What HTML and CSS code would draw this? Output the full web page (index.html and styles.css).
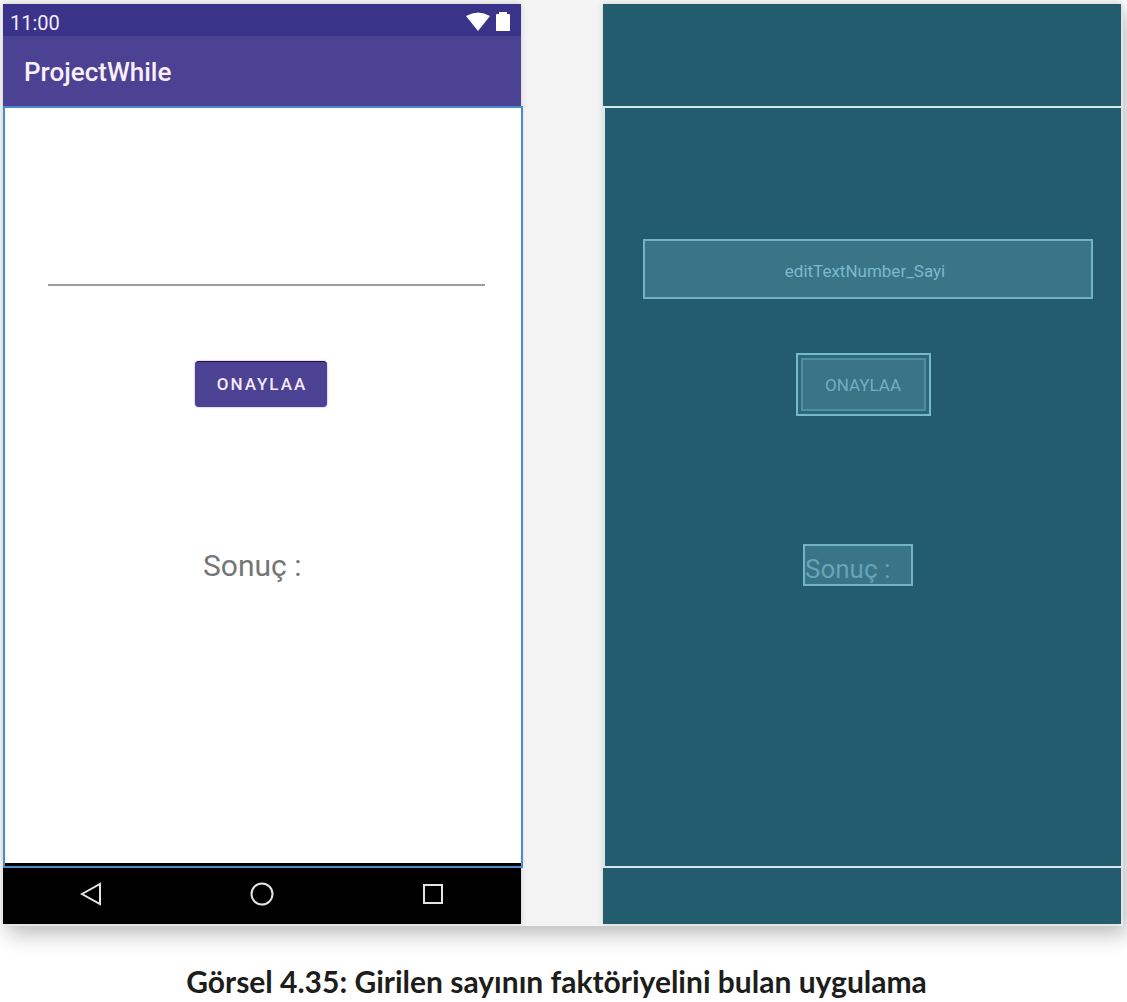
FILE: index.html
```html
<!DOCTYPE html>
<html lang="tr">
<head>
<meta charset="utf-8">
<title>Görsel 4.35</title>
<link rel="stylesheet" href="styles.css">
</head>
<body>
<figure class="figure">
  <div class="canvas">
    <section class="phone" aria-label="Tasarım">
      <div class="status-bar">
        <span>11:00</span>
        <span class="status-icons">
          <svg width="26" height="22" viewBox="0 0 26 22" aria-hidden="true"><path d="M1 4Q13-3 25 4L13 19Z" fill="#fff"/></svg>
          <svg width="16" height="22" viewBox="0 0 16 22" aria-hidden="true"><path d="M4 0h8v2h2q1 0 1 1v16H1V3q0-1 1-1h2Z" fill="#fff"/></svg>
        </span>
      </div>
      <header class="app-bar">ProjectWhile</header>
      <div class="content">
        <input class="number-input" type="text" inputmode="numeric" aria-label="Sayı">
        <button class="confirm" type="button">ONAYLAA</button>
        <div class="result">Sonuç :</div>
      </div>
      <nav class="nav-bar">
        <button class="nav-button" type="button" aria-label="Geri"><svg width="26" height="26" viewBox="0 0 26 26"><path d="M4 13L22 3v20Z"/></svg></button>
        <button class="nav-button" type="button" aria-label="Ana ekran"><svg width="26" height="26" viewBox="0 0 26 26"><circle cx="13" cy="13" r="10.5"/></svg></button>
        <button class="nav-button" type="button" aria-label="Son uygulamalar"><svg width="26" height="26" viewBox="0 0 26 26"><path d="M4 4h18v18H4Z"/></svg></button>
      </nav>
    </section>
    <section class="blueprint" aria-label="Taslak">
      <div class="blueprint-content">
        <input class="blueprint-input" type="text" value="editTextNumber_Sayi" aria-label="editTextNumber_Sayi" readonly>
        <button class="blueprint-button" type="button"><span class="blueprint-button-face">ONAYLAA</span></button>
        <div class="blueprint-result">Sonuç :</div>
      </div>
    </section>
  </div>
  <figcaption class="caption">Görsel 4.35: Girilen sayının faktöriyelini bulan uygulama</figcaption>
</figure>
</body>
</html>
```
FILE: styles.css
```css
* {
  box-sizing: border-box;
}

body {
  margin: 0;
  background: #fff;
  font-family: Roboto, "Liberation Sans", sans-serif;
  overflow-x: hidden;
}

button,
input {
  font-family: inherit;
  margin: 0;
  border-radius: 0;
}

.figure {
  margin: 0;
}

.canvas {
  display: grid;
  grid-template-columns: 1fr 1fr;
  gap: 82px;
  margin-right: 4px;
  padding: 4px 2px 2px 3px;
  background: #f4f4f4;
  box-shadow: 6px 10px 20px -2px #bbb;
}

.phone,
.blueprint {
  display: flex;
  flex-direction: column;
  box-shadow: 0 0 6px #ccc;
}

.status-bar {
  display: flex;
  align-items: center;
  justify-content: space-between;
  height: 32px;
  padding: 6px 10px 0 7px;
  background: #393489;
  color: #f4eafa;
  font-size: 20px;
}

.status-icons {
  display: flex;
  gap: 4px;
}

.app-bar {
  height: 70px;
  padding-left: 21px;
  background: #4b4293;
  color: #fbeffc;
  font-size: 26px;
  font-weight: 500;
  line-height: 72px;
}

.content {
  display: flex;
  flex-direction: column;
  align-items: center;
  min-height: 762px;
  margin-right: -2px;
  padding: 132px 4px 0 0;
  border: 2px solid #4a8bcb;
  background: linear-gradient(#000, #000) bottom / 100% 3px no-repeat #fff;
}

.number-input {
  align-self: stretch;
  height: 46px;
  margin: 0 32px 0 43px;
  padding: 0 4px;
  border: 0;
  border-bottom: 2px solid #9c9c9c;
  background: transparent;
  font-size: 24px;
}

.confirm {
  width: 132px;
  height: 46px;
  margin-top: 75px;
  padding: 0 0 2px 2px;
  border: 0;
  border-top: 1px solid #241047;
  border-radius: 4px;
  background: #4b4293;
  box-shadow: 0 0 2px #a080c0;
  color: #f7e8fa;
  font-size: 17px;
  font-weight: 500;
  letter-spacing: 2px;
}

.result {
  width: 116px;
  margin-top: 138px;
  color: #757575;
  font-size: 30px;
  line-height: 42px;
}

.nav-bar {
  display: flex;
  justify-content: space-around;
  height: 56px;
  padding: 0 3px;
  background: #000;
}

.nav-button {
  padding: 0 0 4px;
  border: 0;
  background: transparent;
}

.nav-button svg {
  display: block;
  fill: none;
  stroke: #e4e4e4;
  stroke-width: 2;
}

.blueprint {
  padding: 102px 0 56px;
  background: #245c6f;
}

.blueprint-content {
  display: flex;
  flex-direction: column;
  align-items: center;
  min-height: 762px;
  padding-top: 131px;
  border: 2px solid #d5e8ee;
  border-right: 0;
}

.blueprint-input {
  align-self: stretch;
  height: 60px;
  margin: 0 28px 0 38px;
  padding: 4px 6px 0 0;
  border: 2px solid #72b4c5;
  background: #397487;
  color: #7bb9ce;
  font-size: 17px;
  text-align: center;
}

.blueprint-button {
  display: flex;
  width: 135px;
  height: 63px;
  margin: 54px 0 0;
  padding: 3px;
  border: 2px solid #78b9c9;
  background: #2c687b;
  color: #72afc3;
  font-size: 17px;
}

.blueprint-button-face {
  flex: 1;
  align-self: stretch;
  border: 2px solid #4f8d9f;
  background: #397487;
  line-height: 50px;
}

.blueprint-result {
  width: 110px;
  height: 42px;
  margin: 128px 10px 0 0;
  border: 2px solid #72b4c5;
  background: #397487;
  color: #68a4b7;
  font-size: 26px;
  line-height: 46px;
}

.caption {
  padding: 37px 14px 0 0;
  color: #1d1d1b;
  font-family: Lato, "Open Sans", sans-serif;
  font-size: 30px;
  font-weight: 700;
  line-height: 36px;
  text-align: center;
}
```
